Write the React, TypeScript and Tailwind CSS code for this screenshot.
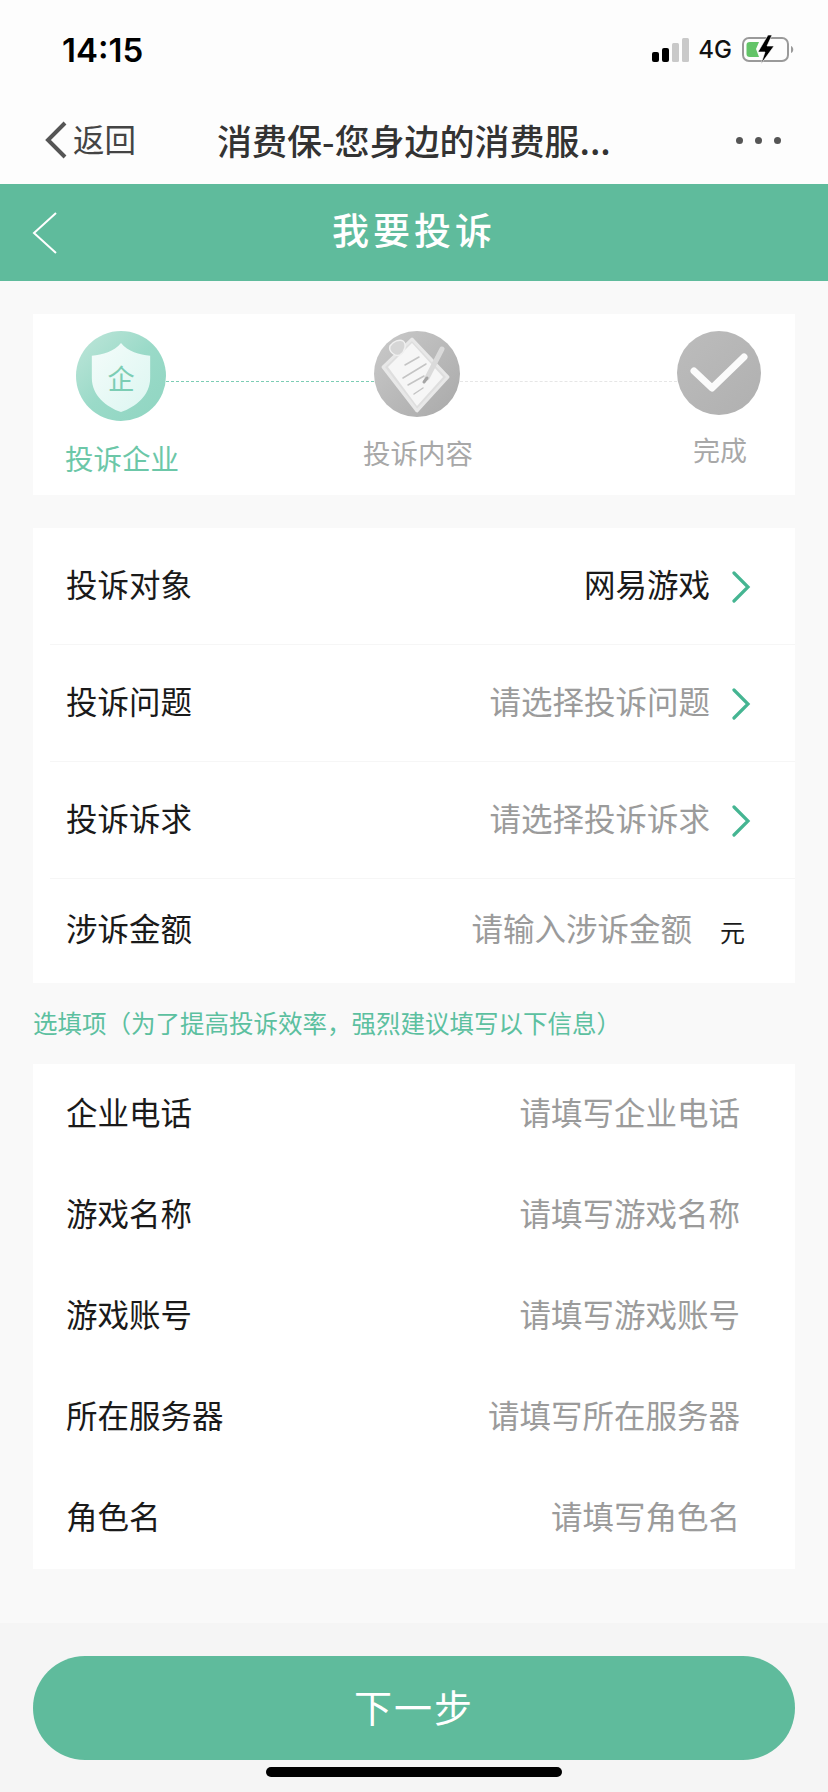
import React from 'react';

const cjk = "font-['Noto_Sans_CJK_SC','Noto_Sans',sans-serif]";

const Chevron = () => (
  <svg width="20" height="32" viewBox="0 0 20 32" fill="none" className="shrink-0">
    <path d="M3 2 L17 16 L3 30" stroke="#45b592" strokeWidth="3.2" strokeLinecap="round" strokeLinejoin="miter" />
  </svg>
);

const SignalBars = () => (
  <svg width="38" height="24" viewBox="0 0 38 24">
    <rect x="0" y="14" width="7" height="10" rx="2" fill="#000" />
    <rect x="10" y="10" width="7" height="14" rx="2" fill="#000" />
    <rect x="20" y="5" width="7" height="19" rx="1.5" fill="#c9c9c9" />
    <rect x="30" y="0" width="7" height="24" rx="1.5" fill="#c9c9c9" />
  </svg>
);

const Battery = () => (
  <svg width="54" height="30" viewBox="0 0 54 30">
    <rect x="1" y="3" width="45" height="23" rx="6" fill="none" stroke="#9a9a9a" strokeWidth="2" />
    <path d="M49 11 C52 12 52 17 49 18 Z" fill="#9a9a9a" />
    <path d="M8 7 H17 L14 14 L17 22 H8 C5.5 22 4.5 21 4.5 19 V10 C4.5 8 5.5 7 8 7 Z" fill="#63c468" />
    <path d="M26 0 L16 17 H23 L19 29 L32 11 H25 L30 0 Z" fill="#000" stroke="#fff" strokeWidth="0.6" />
  </svg>
);

const ShieldStep = () => (
  <div className="w-[90px] h-[90px] rounded-full bg-gradient-to-br from-[#bfe6da] via-[#9adac8] to-[#8fd5c1] flex items-center justify-center">
    <svg width="62" height="70" viewBox="0 0 62 72" className="mt-[4px]">
      <defs>
        <linearGradient id="sh" x1="0" y1="0" x2="1" y2="1">
          <stop offset="0" stopColor="#f4fcfa" />
          <stop offset="1" stopColor="#dcf6f1" />
        </linearGradient>
      </defs>
      <path d="M31 0 C38 9 50 12 61 13 V36 C61 54 46 66 31 71 C16 66 1 54 1 36 V13 C12 12 24 9 31 0 Z" fill="url(#sh)" />
      <text x="31" y="47" textAnchor="middle" fontSize="28" fill="#7ccdb4" fontFamily="'Noto Sans CJK SC',sans-serif">企</text>
    </svg>
  </div>
);

const ClipboardStep = () => (
  <div className="w-[86px] h-[86px] rounded-full bg-gradient-to-br from-[#cacaca] to-[#a9a9a9] overflow-hidden">
    <svg width="86" height="86" viewBox="0 0 86 86">
      <path d="M38 8 L74 46 L43 80 L9 36 Z" fill="#dedede" stroke="#e8e8e8" strokeWidth="3" strokeLinejoin="round" />
      <path d="M38 12 L69 46 L43 75 L14 36 Z" fill="#f6f6f6" />
      <path d="M16 15 C19 10 26 8 29 10 C33 13 31 21 26 24 C22 26 14 21 16 15 Z" fill="#d6d6d6" stroke="#f0f0f0" strokeWidth="1.5" />
      <path d="M31 34 L45 26 M29 47 L52 33 M34 54 L50 45 M40 63 L49 57" stroke="#c4c4c4" strokeWidth="1.5" strokeLinecap="round" />
      <path d="M68 18 L53 47" stroke="#dadada" strokeWidth="5" strokeLinecap="round" />
      <path d="M53 47 L50 51" stroke="#a5a5a5" strokeWidth="3" strokeLinecap="round" />
    </svg>
  </div>
);

const CheckStep = () => (
  <div className="w-[84px] h-[84px] rounded-full bg-gradient-to-br from-[#bcbcbc] to-[#b0b0b0] flex items-center justify-center">
    <svg width="60" height="42" viewBox="0 0 60 42">
      <path d="M5 19 L23 36 L55 5" fill="none" stroke="#fff" strokeWidth="7" strokeLinecap="round" strokeLinejoin="round" opacity="0.95" />
    </svg>
  </div>
);

const SelectRow = ({ label, value, filled }: { label: string; value: string; filled?: boolean }) => (
  <div className="h-[117px] ml-[17px] pl-[16px] pr-[44px] flex items-center justify-between border-b border-[#f6f6f6]">
    <span className="mb-[5px] text-[31.5px] leading-none text-[#1a1a1a]">{label}</span>
    <span className="flex items-center">
      <span className={`mb-[5px] text-[31.5px] leading-none ${filled ? 'text-[#1a1a1a]' : 'text-[#9b9b9b]'}`}>{value}</span>
      <span className="ml-[21px] mt-[2px] flex"><Chevron /></span>
    </span>
  </div>
);

const InputRow = ({ label, placeholder }: { label: string; placeholder: string }) => (
  <div className="h-[101px] pl-[33px] pr-[55px] flex items-center justify-between">
    <span className="mb-[5px] text-[31.5px] leading-none text-[#1a1a1a]">{label}</span>
    <span className="mb-[5px] text-[31.5px] leading-none text-[#9b9b9b]">{placeholder}</span>
  </div>
);

const optional = [
  ['企业电话', '请填写企业电话'],
  ['游戏名称', '请填写游戏名称'],
  ['游戏账号', '请填写游戏账号'],
  ['所在服务器', '请填写所在服务器'],
  ['角色名', '请填写角色名'],
];

export default function App() {
  return (
    <div className={`w-[828px] h-[1792px] bg-[#f9f9f9] flex flex-col overflow-hidden ${cjk}`}>
      {/* system bars */}
      <div className="h-[184px] bg-[#fdfdfd] shrink-0">
        <div className="h-[96px] flex justify-between items-start pl-[62px] pr-[32px] pt-[31px]">
          <span className="font-['Inter',sans-serif] font-semibold text-[33px] leading-[38px] text-black">14:15</span>
          <div className="flex items-center pt-[4px]">
            <SignalBars />
            <span className="ml-[8px] font-['Inter',sans-serif] font-medium text-[24px] leading-none text-[#111]">4G</span>
            <span className="ml-[10px] flex"><Battery /></span>
          </div>
        </div>
        <div className="h-[88px] flex items-center pl-[44px] pr-[47px]">
          <svg width="24" height="38" viewBox="0 0 24 38" fill="none" className="shrink-0">
            <path d="M21 2 L4 19 L21 36" stroke="#555" strokeWidth="4" />
          </svg>
          <span className="ml-[5px] mb-[2px] text-[31.5px] leading-none text-[#444]">返回</span>
          <span className="ml-[81px] mb-[2px] text-[35px] leading-none font-medium text-[#333] whitespace-nowrap">消费保-您身边的消费服...</span>
          <div className="ml-auto flex gap-[12px]">
            <span className="w-[7px] h-[7px] rounded-full bg-[#555]" />
            <span className="w-[7px] h-[7px] rounded-full bg-[#555]" />
            <span className="w-[7px] h-[7px] rounded-full bg-[#555]" />
          </div>
        </div>
      </div>

      {/* page header */}
      <div className="h-[97px] bg-[#5fbb9c] shrink-0 flex items-center relative">
        <svg width="26" height="44" viewBox="0 0 26 44" fill="none" className="ml-[32px] shrink-0">
          <path d="M24 2 L2 22 L24 42" stroke="#fff" strokeWidth="2" />
        </svg>
        <span className="absolute left-0 right-0 top-[27px] text-center text-[37px] leading-none tracking-[4px] font-medium text-white">我要投诉</span>
      </div>

      {/* steps */}
      <div className="mx-[33px] mt-[33px] h-[181px] bg-white shrink-0">
        <div className="flex items-start pt-[17px] pl-[43px]">
          <ShieldStep />
          <div className="w-[208px] mt-[50px] border-t border-dashed border-[#7ccdb4]" />
          <ClipboardStep />
          <div className="w-[217px] mt-[50px] border-t border-dashed border-[#e6e6e6]" />
          <CheckStep />
        </div>
        <div className="flex items-start pl-[32px]">
          <span className="mt-[23px] text-[28.5px] leading-none text-[#6cc7a8] whitespace-nowrap">投诉企业</span>
          <span className="ml-[184px] mt-[18px] text-[27.5px] leading-none text-[#a8a8a8] whitespace-nowrap">投诉内容</span>
          <span className="ml-[220px] mt-[15px] text-[27px] leading-none text-[#a8a8a8] whitespace-nowrap">完成</span>
        </div>
      </div>

      {/* required fields */}
      <div className="mx-[33px] mt-[33px] bg-white shrink-0">
        <SelectRow label="投诉对象" value="网易游戏" filled />
        <SelectRow label="投诉问题" value="请选择投诉问题" />
        <SelectRow label="投诉诉求" value="请选择投诉诉求" />
        <div className="h-[104px] pl-[33px] pr-[50px] flex items-center justify-between">
          <span className="mb-[6px] text-[31.5px] leading-none text-[#1a1a1a]">涉诉金额</span>
          <span className="flex items-center">
            <span className="mb-[6px] text-[31.5px] leading-none text-[#9b9b9b]">请输入涉诉金额</span>
            <span className="ml-[28px] text-[25px] leading-none text-[#1a1a1a]">元</span>
          </span>
        </div>
      </div>

      <div className="h-[81px] shrink-0 pl-[33px] flex items-center text-[24.5px] leading-none text-[#5cc0a0] whitespace-nowrap">
        选填项（为了提高投诉效率，强烈建议填写以下信息）
      </div>

      {/* optional fields */}
      <div className="mx-[33px] bg-white shrink-0">
        {optional.map(([label, placeholder]) => (
          <InputRow key={label} label={label} placeholder={placeholder} />
        ))}
      </div>

      {/* footer */}
      <div className="mt-[54px] flex-1 bg-[#f5f5f5] flex flex-col items-center">
        <div className="mt-[33px] w-[762px] h-[104px] rounded-full bg-[#5fbb9c] flex items-center justify-center">
          <span className="mb-[4px] text-[38px] leading-none tracking-[2px] text-white">下一步</span>
        </div>
        <div className="mt-[7px] w-[296px] h-[10px] rounded-full bg-black" />
      </div>
    </div>
  );
}
